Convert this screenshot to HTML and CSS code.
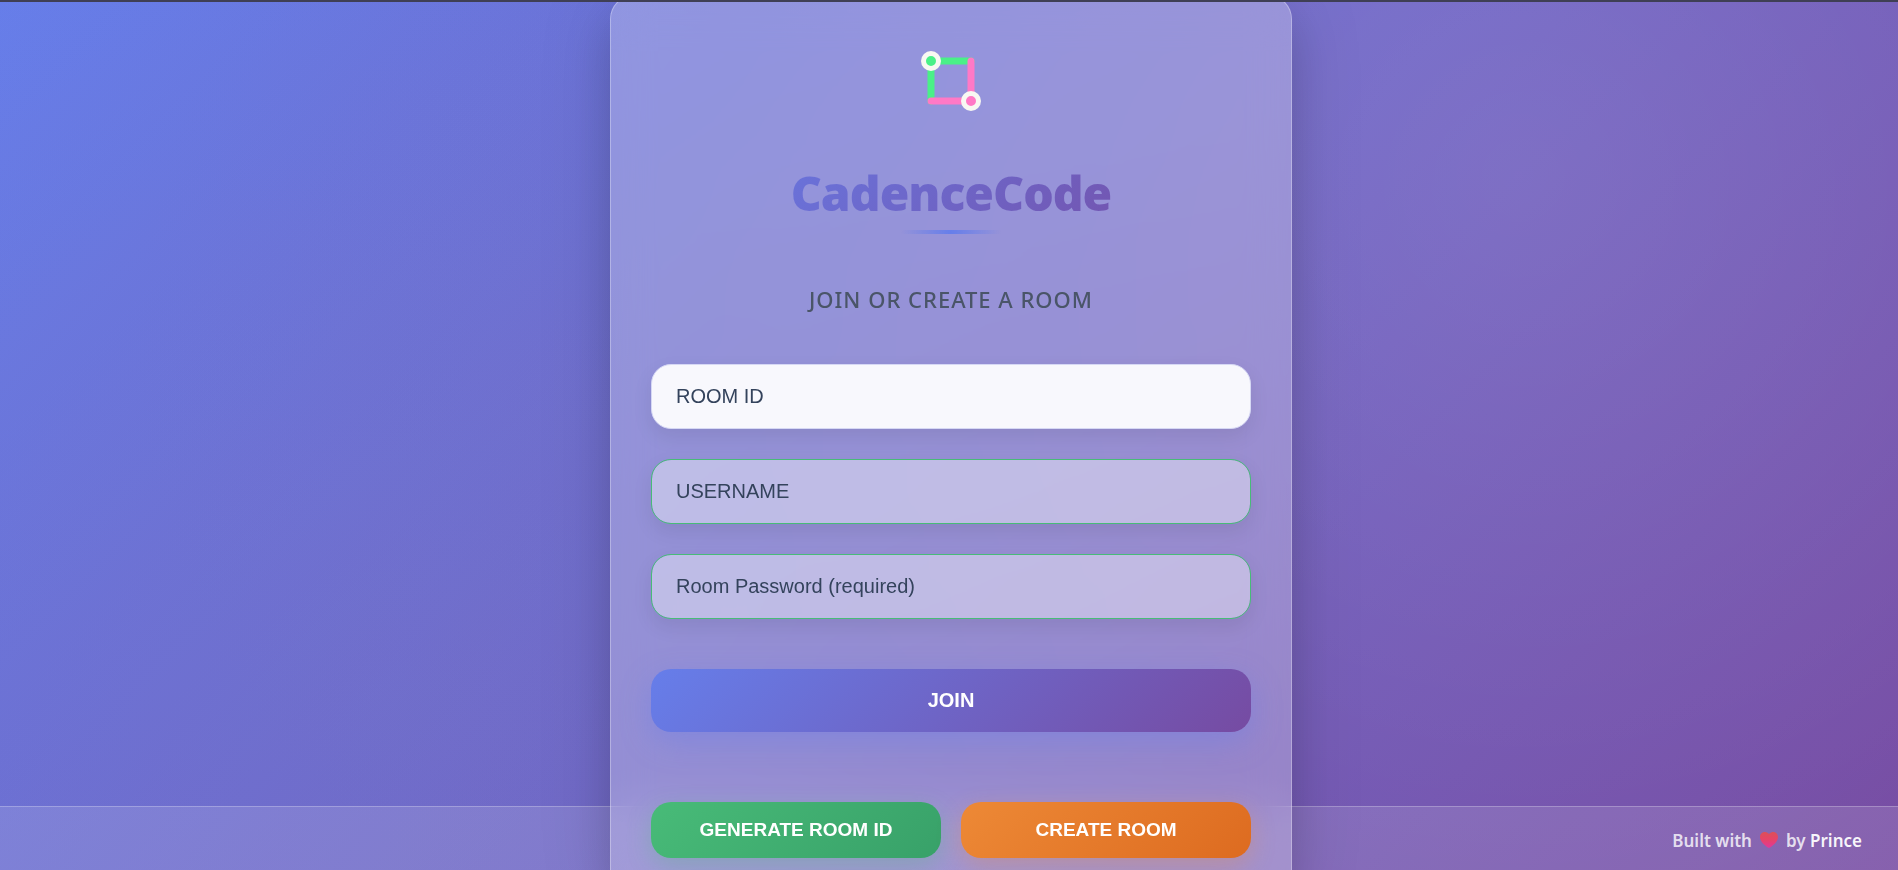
FILE: index.html
```html
<!DOCTYPE html>
<html lang="en">
<head>
<meta charset="utf-8">
<title>CadenceCode</title>
<link rel="stylesheet" href="styles.css">
</head>
<body>
<div class="page">
  <main class="card">
    <svg class="logo" viewBox="0 0 100 100" aria-hidden="true">
      <g fill="none" stroke-width="7" stroke-linecap="round" stroke-linejoin="round">
        <path d="M70 30H30V70" stroke="#4af088"/>
        <path d="M70 30V70H30" stroke="#ff79c6"/>
      </g>
      <circle cx="30" cy="30" r="7.5" fill="#4af088" stroke="#f8f8f2" stroke-width="5"/>
      <circle cx="70" cy="70" r="7.5" fill="#ff79c6" stroke="#f8f8f2" stroke-width="5"/>
    </svg>
    <h1 class="title">CadenceCode</h1>
    <h2 class="subtitle">JOIN OR CREATE A ROOM</h2>
    <form class="form">
      <input class="field field-plain" type="text" placeholder="ROOM ID" aria-label="Room ID">
      <input class="field" type="text" placeholder="USERNAME" aria-label="Username">
      <input class="field" type="password" placeholder="Room Password (required)" aria-label="Room password">
      <button class="btn btn-join" type="button">JOIN</button>
      <div class="actions">
        <button class="btn btn-generate" type="button">GENERATE ROOM ID</button>
        <button class="btn btn-create" type="button">CREATE ROOM</button>
      </div>
    </form>
  </main>
  <footer class="footer">
    <span>Built with</span>
    <svg class="heart" viewBox="0 0 18 16" aria-hidden="true">
      <defs><linearGradient id="heart" x1="0" y1="0" x2="0" y2="1"><stop offset="0" stop-color="#dc5058"/><stop offset=".5" stop-color="#e6436a"/><stop offset="1" stop-color="#e0389c"/></linearGradient></defs>
      <path fill="url(#heart)" d="M9 2C7.500.5 6.200 0 4.800 0 2 0 0 2.200 0 5c0 4.500 5 9 9 11 4-2 9-6.500 9-11 0-2.800-2-5-4.800-5C11.800 0 10.500.5 9 2Z"/>
    </svg>
    <span>by <strong class="author">Prince</strong></span>
  </footer>
</div>
</body>
</html>
```
FILE: styles.css
```css
* { box-sizing: border-box; }

body {
  margin: 0;
  font-family: "Noto Sans", "Open Sans", sans-serif;
}

.page {
  position: relative;
  height: 100vh;
  overflow: hidden;
  display: flex;
  justify-content: center;
  align-items: flex-start;
  padding-left: 4px;
  border-top: 2px solid #3f3f55;
  background:
    radial-gradient(circle at 20% 80%, rgba(120, 119, 198, 0.3) 0%, transparent 50%),
    radial-gradient(circle at 80% 20%, rgba(255, 255, 255, 0.1) 0%, transparent 50%),
    radial-gradient(circle at 40% 40%, rgba(120, 119, 198, 0.2) 0%, transparent 50%),
    linear-gradient(135deg, #667eea 0%, #764ba2 100%);
}

.card {
  position: relative;
  z-index: 1;
  width: 682px;
  max-width: 100%;
  margin-top: -7px;
  padding: 35px 40px 40px;
  display: flex;
  flex-direction: column;
  align-items: center;
  border: 1px solid rgba(255, 255, 255, 0.3);
  border-radius: 24px;
  background: rgba(255, 255, 255, 0.25);
  backdrop-filter: blur(20px);
  box-shadow: 0 25px 45px rgba(0, 0, 0, 0.15), 0 0 80px rgba(0, 0, 0, 0.1);
}

.logo {
  width: 100px;
  height: 100px;
}

.title {
  position: relative;
  align-self: stretch;
  margin: 28px 0 0;
  font-family: "Open Sans", "Noto Sans", sans-serif;
  font-size: 48px;
  font-weight: 800;
  line-height: 68px;
  letter-spacing: -1px;
  text-align: center;
  color: transparent;
  background: linear-gradient(135deg, #667eea 0%, #764ba2 100%);
  background-clip: text;
  -webkit-background-clip: text;
}

.title::after {
  content: "";
  position: absolute;
  left: 50%;
  bottom: -7px;
  width: 100px;
  height: 4px;
  margin-left: -50px;
  border-radius: 2px;
  background: linear-gradient(90deg, transparent, #667eea, transparent);
}

.subtitle {
  margin: 56px 0 49px;
  font-size: 22px;
  font-weight: 500;
  line-height: 32px;
  letter-spacing: 1px;
  color: #4a5568;
}

.form {
  align-self: stretch;
  display: flex;
  flex-direction: column;
  gap: 30px;
}

.field {
  width: 100%;
  height: 65px;
  padding: 0 24px;
  border: 1px solid #48bb78;
  border-radius: 20px;
  background: rgba(255, 255, 255, 0.4);
  background-clip: padding-box;
  box-shadow: 0 8px 20px rgba(0, 0, 0, 0.08);
  font: 20px "Liberation Sans", Arial, sans-serif;
  color: #2d3748;
}

.field::placeholder {
  color: #34435c;
  opacity: 1;
}

.field-plain {
  border-color: #d6d8f4;
  background: #f8f8fd;
}

.btn {
  border: 0;
  border-radius: 20px;
  color: #fff;
  font: bold 19px "Liberation Sans", Arial, sans-serif;
}

.btn-join {
  height: 63px;
  margin-top: 20px;
  font-size: 20px;
  background: linear-gradient(135deg, #667eea 0%, #764ba2 100%);
  box-shadow: 0 10px 30px rgba(102, 126, 234, 0.4);
}

.actions {
  display: grid;
  grid-template-columns: 1fr 1fr;
  gap: 20px;
  margin-top: 40px;
}

.btn-generate {
  height: 56px;
  background: linear-gradient(135deg, #48bb78 0%, #38a169 100%);
  box-shadow: 0 8px 25px rgba(72, 187, 120, 0.3);
}

.btn-create {
  height: 56px;
  background: linear-gradient(135deg, #ed8936 0%, #dd6b20 100%);
  box-shadow: 0 8px 25px rgba(237, 137, 54, 0.3);
}

.footer {
  position: absolute;
  left: 0;
  right: 0;
  bottom: 0;
  height: 64px;
  padding: 3px 36px 0;
  display: flex;
  justify-content: flex-end;
  align-items: center;
  gap: 8px;
  border-top: 1px solid rgba(255, 255, 255, 0.25);
  background: rgba(255, 255, 255, 0.12);
  color: rgba(255, 255, 255, 0.8);
  font-size: 17px;
  font-weight: 600;
}

.heart {
  width: 18px;
  height: 16px;
}

.author {
  font-weight: 600;
  color: rgba(255, 255, 255, 0.95);
}
```
